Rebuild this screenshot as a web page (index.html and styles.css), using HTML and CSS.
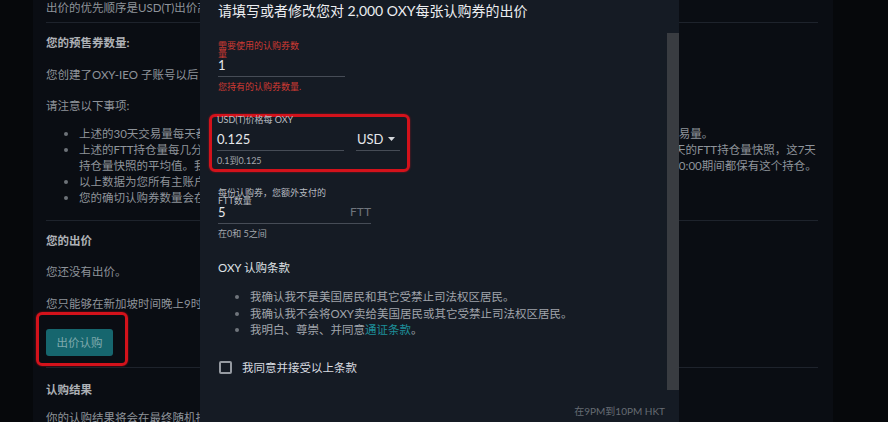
FILE: index.html
```html
<!DOCTYPE html>
<html lang="zh-CN">
<head>
    <meta charset="UTF-8">
    <meta name="viewport" content="width=device-width, initial-scale=1.0">
    <title>OXY 认购</title>
    <link rel="stylesheet" href="styles.css">
</head>
<body>
    <main class="panel">
        <p>出价的优先顺序是USD(T)出价高者优先，同价按时间先后排序。</p>
        <hr>
        <h4>您的预售券数量:</h4>
        <p class="gap16">您创建了OXY-IEO 子账号以后，就可以在这里看到您的预售券数量。</p>
        <p class="gap15">请注意以下事项:</p>
        <ul class="notes">
            <li><span>上述的30天交易量每天都更新一次，计算的是您在认购开始前三十天内在平台上所有现货、期货、杠杆代币和期权总交易量。</span></li>
            <li><span>上述的FTT持仓量每几分钟记录一次，我们会在认购开始前的七天里随机选取一些时间点，并且会分别取得您在过去七天的FTT持仓量快照，这7天<br>持仓量快照的平均值。我们建议您确保在认购开始之前的整整七天时间里，每天都是从新加坡时间0点到第二天的凌晨00:00期间都保有这个持仓。</span></li>
            <li><span>以上数据为您所有主账户和子账户的合计数据。</span></li>
            <li><span>您的确切认购券数量会在认购开始前公布。</span></li>
        </ul>
        <hr class="gap14">
        <h4>您的出价</h4>
        <p class="gap15">您还没有出价。</p>
        <p class="gap16">您只能够在新加坡时间晚上9时到10时之间出价。</p>
        <div class="mark mark-btn"><button class="bid-btn">出价认购</button></div>
        <hr class="gap1">
        <h4 class="gap14">认购结果</h4>
        <p class="gap12">你的认购结果将会在最终随机抽签以后公布。</p>
    </main>

    <div class="modal">
        <div class="modal-head">
            <h3>请填写或者修改您对 2,000 OXY每张认购券的出价</h3>
        </div>
        <div class="modal-body">
            <div class="modal-content">
                <div class="field error">
                    <label class="field-label w85">需要使用的认购券数量</label>
                    <div class="field-input w127">1</div>
                    <div class="field-help">您持有的认购券数量.</div>
                </div>

                <div class="mark mark-field">
                    <div class="field">
                        <label class="field-label w127">USD(T)价格每 OXY</label>
                        <div class="field-row">
                            <div class="field-input w127">0.125</div>
                            <div class="field-input select">USD
                                <svg width="7" height="4" viewBox="0 0 7 4"><path d="M0 0h7L3.5 4z" fill="#d4d7db"/></svg>
                            </div>
                        </div>
                        <div class="field-help">0.1到0.125</div>
                    </div>
                </div>

                <div class="field gap17">
                    <label class="field-label w112">每份认购券，您额外支付的FTT数量</label>
                    <div class="field-input w153">5<span class="suffix">FTT</span></div>
                    <div class="field-help">在0和 5之间</div>
                </div>

                <h5 class="terms-title">OXY 认购条款</h5>
                <ul class="terms">
                    <li><span>我确认我不是美国居民和其它受禁止司法权区居民。</span></li>
                    <li><span>我确认我不会将OXY卖给美国居民或其它受禁止司法权区居民。</span></li>
                    <li><span>我明白、尊崇、并同意<a href="#">通证条款</a>。</span></li>
                </ul>

                <label class="agree"><span class="box"></span>我同意并接受以上条款</label>
            </div>
            <div class="scrollbar"></div>
        </div>
        <div class="modal-foot">在9PM到10PM HKT</div>
    </div>
</body>
</html>
```

FILE: styles.css
```css
body { margin: 0; height: 422px; overflow: hidden; background: #06080b;
       font-family: Lato, "Noto Sans CJK SC", sans-serif; font-size: 11.5px; line-height: 16px; color: #8e939a; }

.panel { width: 800px; height: 422px; margin-left: 33px; padding: 0 15px 0 13px; box-sizing: border-box; background: #0a0d13; }
.panel p { margin: 0; }
.panel h4 { margin: 12px 0 0; font-size: 11.5px; font-weight: bold; color: #aeb1b6; }
.panel hr { margin: 6px 0 0; height: 1px; border: 0; background: #1e232c; }
.panel .gap16 { margin-top: 16px; }
.panel .gap15 { margin-top: 15px; }
.panel .gap14 { margin-top: 14px; }
.panel .gap12 { margin-top: 12px; }
.panel .gap1 { margin-top: 1px; }

.notes { margin: 12px 0 0; padding-left: 33px; list-style: none; }
.notes li, .terms li { display: flex; }
.notes li::before, .terms li::before { content: ""; flex: none; width: 4px; height: 4px; margin: 6px 11px 0 -15px;
                                       border-radius: 50%; background: #6d7279; }

.mark { border: 3px solid #d3121b; border-radius: 6px; box-shadow: 0 0 2px rgba(211, 18, 27, 0.7); width: fit-content; }
.mark-btn { margin-left: -10px; padding: 14px 12px 7px 7px; }
.bid-btn { display: block; width: 67px; height: 27px; padding: 0; border: none; border-radius: 3px; background: #16666e;
           color: #7fa9ad; font: inherit; font-size: 11.5px; }

.modal { position: absolute; left: 200px; top: 0; width: 479px; height: 422px; background: #151b24;
         display: flex; flex-direction: column; }
.modal-head { height: 33px; padding: 1px 0 0 18px; box-sizing: border-box; }
.modal-head h3 { margin: 0; font-size: 14px; line-height: 20px; font-weight: normal; color: #eceef1; }
.modal-body { display: flex; height: 357px; }
.modal-content { flex: 1; padding: 9px 0 0 18px; }
.scrollbar { width: 12px; background: #393c41; }
.modal-foot { flex: 1; padding: 16px 14px 0 0; text-align: right; font-size: 10px; line-height: 10px; color: #666b73; }

.field-label { display: block; height: 16px; font-size: 9px; line-height: 8px; color: #b9bdc2; }
.field-input { display: flex; align-items: center; height: 14px; padding-bottom: 4px; border-bottom: 1px solid #464c56;
               font-size: 13px; line-height: 14px; color: #e6e8eb; }
.field-help { margin-top: 5px; font-size: 9px; line-height: 10px; color: #a3a7ad; }
.field.error .field-label, .field.error .field-help { color: #cf3a33; }
.w85 { width: 85px; }
.w112 { width: 112px; }
.w127 { width: 127px; }
.w153 { width: 153px; }
.gap17 { margin-top: 17px; }

.mark-field { margin: 22px 0 0 -9px; padding: 0 7px 3px 5px; }
.mark-field .field { margin-top: -1px; }
.field-row { display: flex; gap: 12px; }
.select { width: 38px; padding: 0 5px 4px 1px; justify-content: space-between; }
.suffix { margin-left: auto; font-size: 12px; color: #6e747c; }

.terms-title { margin: 21px 0 0; font-size: 11.5px; line-height: 16px; font-weight: normal; color: #dfe2e6; }
.terms { margin: 13px 0 0; padding-left: 32px; list-style: none; line-height: 16.5px; color: #a0a4ab; }
.terms li::before { margin-top: 6px; background: #70757c; }
.terms a { color: #1d8f9a; text-decoration: none; }

.agree { display: flex; align-items: center; gap: 10px; height: 16px; margin-top: 21px; padding-left: 1px; color: #d8dbe0; }
.agree .box { width: 13px; height: 13px; box-sizing: border-box; border: 2px solid #959aa1; border-radius: 2px; }
```
